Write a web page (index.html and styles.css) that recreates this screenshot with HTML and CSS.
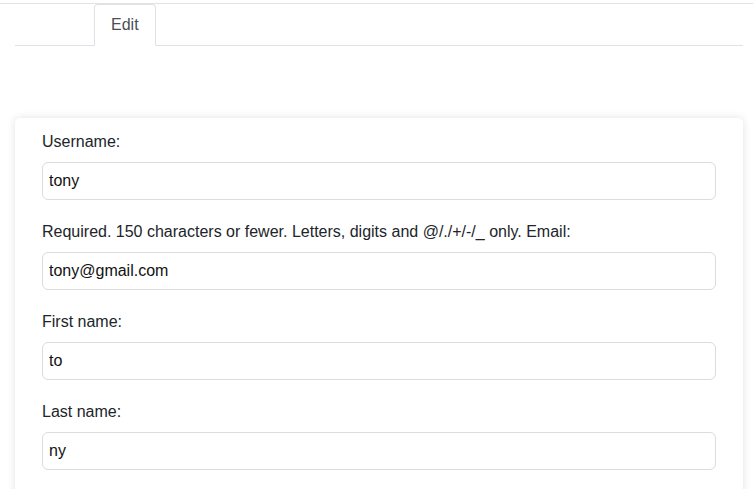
FILE: index.html
```html
<!DOCTYPE html>
<html lang="en">
<head>
<meta charset="utf-8">
<title>Edit profile</title>
<link rel="stylesheet" href="styles.css">
</head>
<body>
<div class="topbar"></div>
<div class="container">
  <ul class="tabs">
    <li class="tab active">Edit</li>
  </ul>
  <form class="card">
    <div class="group">
      <label class="label" for="username">Username:</label>
      <input class="field" id="username" type="text" value="tony">
    </div>
    <div class="group">
      <label class="label" for="email">Required. 150 characters or fewer. Letters, digits and @/./+/-/_ only. Email:</label>
      <input class="field" id="email" type="text" value="tony@gmail.com">
    </div>
    <div class="group">
      <label class="label" for="first">First name:</label>
      <input class="field" id="first" type="text" value="to">
    </div>
    <div class="group">
      <label class="label" for="last">Last name:</label>
      <input class="field" id="last" type="text" value="ny">
    </div>
  </form>
</div>
</body>
</html>
```
FILE: styles.css
```css
* { box-sizing: border-box; }
html, body {
  margin: 0;
  padding: 0;
  background: #fff;
  font-family: "Liberation Sans", Arial, sans-serif;
  font-size: 16px;
  line-height: 24px;
  color: #212529;
}
.topbar {
  height: 4px;
  border-bottom: 1px solid #e3e3e3;
}
.container {
  margin: 0 10px 0 15px;
}
.tabs {
  list-style: none;
  margin: 0;
  padding: 0 0 0 79px;
  display: flex;
  border-bottom: 1px solid #dee2e6;
}
.tab {
  padding: 8px 16px;
  margin-bottom: -1px;
  color: #495057;
  border: 1px solid transparent;
  border-top-left-radius: 4px;
  border-top-right-radius: 4px;
}
.tab.active {
  background: #fff;
  border-color: #dee2e6 #dee2e6 #fff;
}
.card {
  margin-top: 72px;
  padding: 12px 27px 20px;
  background: #fff;
  border-radius: 5px;
  box-shadow: 0 0 8px rgba(0, 0, 0, 0.12);
  display: flex;
  flex-direction: column;
  gap: 20px;
  min-height: 400px;
}
.group {
  display: flex;
  flex-direction: column;
  gap: 8px;
}
.label {
  display: block;
}
.field {
  display: block;
  width: 100%;
  height: 38px;
  padding: 6px 6px;
  font-family: "Liberation Sans", Arial, sans-serif;
  font-size: 16px;
  line-height: 24px;
  color: #111;
  background: #fff;
  border: 1px solid #dcdcdc;
  border-radius: 6px;
  outline: none;
}
```
